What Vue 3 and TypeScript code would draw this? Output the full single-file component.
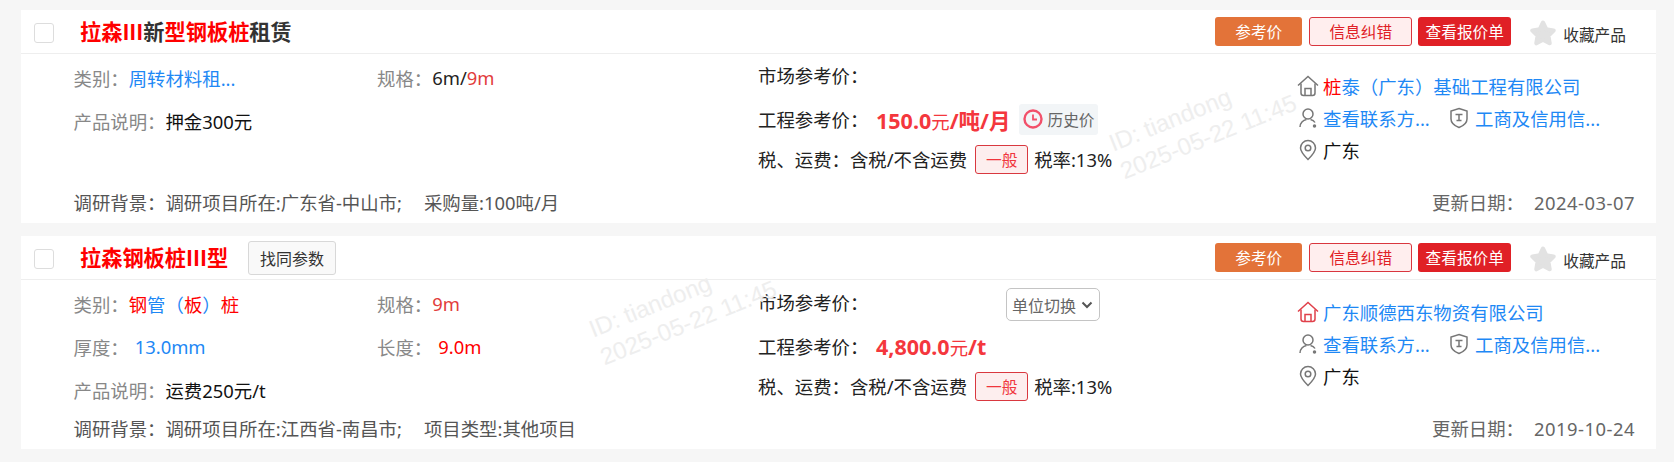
<script setup lang="ts">
type Seg = { t: string; red?: boolean };
type Field = { label: string; segs: Seg[]; cls?: string; gap?: boolean };

const products = [
  {
    id: 1,
    title: [
      { t: "拉森III", red: true },
      { t: "新" },
      { t: "型钢板桩", red: true },
      { t: "租赁" },
    ] as Seg[],
    same: false,
    fields: [
      { label: "类别：", segs: [{ t: "周转材料租..." }], cls: "blue" },
      { label: "规格：", segs: [{ t: "6m/" }, { t: "9m", red: true }], cls: "spec" },
    ] as Field[],
    note: "押金300元",
    background: "调研项目所在:广东省-中山市;",
    extra: "采购量:100吨/月",
    unitSwitch: false,
    price: "150.0",
    unit: "/吨/月",
    history: true,
    company: [{ t: "桩", red: true }, { t: "泰（广东）基础工程有限公司" }] as Seg[],
    houseRed: false,
    date: "2024-03-07",
    mark: "mark-a",
  },
  {
    id: 2,
    title: [{ t: "拉森钢板桩III型", red: true }] as Seg[],
    same: true,
    fields: [
      {
        label: "类别：",
        segs: [
          { t: "钢", red: true },
          { t: "管（" },
          { t: "板", red: true },
          { t: "）" },
          { t: "桩", red: true },
        ],
        cls: "blue",
      },
      { label: "规格：", segs: [{ t: "9m", red: true }], cls: "spec" },
      { label: "厚度：", segs: [{ t: "13.0mm" }], cls: "blue", gap: true },
      { label: "长度：", segs: [{ t: "9.0m", red: true }], gap: true },
    ] as Field[],
    note: "运费250元/t",
    background: "调研项目所在:江西省-南昌市;",
    extra: "项目类型:其他项目",
    unitSwitch: true,
    price: "4,800.0",
    unit: "/t",
    history: false,
    company: [{ t: "广东顺德西东物资有限公司" }] as Seg[],
    houseRed: true,
    date: "2019-10-24",
    mark: "mark-b",
  },
];
</script>

<template>
  <div class="page">
    <div v-for="p in products" :key="p.id" class="card">
      <div class="head">
        <span class="check"></span>
        <h3 class="title">
          <span v-for="s in p.title" :key="s.t" :class="{ red: s.red }">{{ s.t }}</span>
        </h3>
        <button v-if="p.same" class="same">找同参数</button>
        <div class="actions">
          <span class="btn orange">参考价</span>
          <span class="btn outline">信息纠错</span>
          <span class="btn solid">查看报价单</span>
          <span class="fav">
            <svg width="28" height="28" viewBox="1 2 26 26">
              <path
                d="M14 4.500l3 6.300 6.800 1-4.900 4.800 1.200 6.900-6.100-3.300-6.100 3.300 1.200-6.900-4.900-4.800 6.800-1z"
                fill="#e2e2e2"
                stroke="#e2e2e2"
                stroke-width="4"
                stroke-linejoin="round"
              />
            </svg>
            收藏产品
          </span>
        </div>
      </div>

      <div class="body">
        <div class="left">
          <div class="fields">
            <div v-for="f in p.fields" :key="f.label" class="field">
              <span class="label">{{ f.label }}</span>
              <span class="value" :class="[f.cls, { spaced: f.gap }]">
                <span v-for="s in f.segs" :key="s.t" :class="{ red: s.red }">{{ s.t }}</span>
              </span>
            </div>
            <div class="field wide">
              <span class="label">产品说明：</span>
              <span class="value note">{{ p.note }}</span>
            </div>
          </div>
          <div class="bg-row">
            <span>调研背景：</span>
            <span>{{ p.background }}</span>
            <span class="extra">{{ p.extra }}</span>
          </div>
        </div>

        <div class="mid" :class="{ 'has-select': p.unitSwitch }">
          <div class="mid-row">
            <span>市场参考价：</span>
            <span v-if="p.unitSwitch" class="select">
              单位切换
              <svg width="12" height="8" viewBox="0 0 12 8">
                <path d="M1.500 1.500L6 6l4.500-4.500" fill="none" stroke="#555" stroke-width="2" />
              </svg>
            </span>
          </div>
          <div class="mid-row">
            <span class="price-label">工程参考价：</span>
            <span class="price">{{ p.price }}<em>元</em>{{ p.unit }}</span>
            <span v-if="p.history" class="history">
              <svg width="20" height="20" viewBox="0 0 20 20">
                <circle cx="10" cy="10" r="8.500" fill="none" stroke="#f2506a" stroke-width="2.400" />
                <path d="M10 5.500V10.500H14" fill="none" stroke="#f2506a" stroke-width="1.800" />
              </svg>
              历史价
            </span>
          </div>
          <div class="mid-row tax">
            <span>税、运费：</span>
            <span>含税/不含运费</span>
            <span class="tag">一般</span>
            <span>税率:13%</span>
          </div>
        </div>

        <div class="right">
          <div class="line">
            <svg class="ico" width="22" height="22" viewBox="0 0 22 22" :class="{ 'ico-red': p.houseRed }">
              <path d="M1 10.500L11 1.500l10 9" />
              <path d="M4 8.500v9.500a2.500 2.500 0 0 0 2.500 2.500h9a2.500 2.500 0 0 0 2.500-2.500V8.500" />
              <path d="M8 20.500v-7h6v7" />
            </svg>
            <span class="link">
              <span v-for="s in p.company" :key="s.t" :class="{ red: s.red }">{{ s.t }}</span>
            </span>
          </div>
          <div class="line">
            <svg class="ico" width="22" height="22" viewBox="0 0 22 22">
              <circle cx="11" cy="7" r="5" />
              <path d="M3 20c0-4 3-7 6.500-7.500" />
              <path d="M13.500 12.500c2 .4 3.600 1.400 4.500 3" />
              <circle cx="17.500" cy="19" r="1" fill="#777" />
            </svg>
            <span class="link contact">查看联系方...</span>
            <svg class="ico shield" width="20" height="22" viewBox="0 0 20 22">
              <path d="M10 1.500l8 2.500v8c0 4-4 7-8 8.500-4-1.500-8-4.500-8-8.500V4z" />
              <path d="M6.500 7.500h7M10 7.500v6M7.500 13.500h5" />
            </svg>
            <span class="link">工商及信用信...</span>
          </div>
          <div class="line">
            <svg class="ico" width="22" height="22" viewBox="0 0 22 22">
              <path d="M11 20.500c-4-4-7.500-7.500-7.500-11.500a7.500 7.500 0 0 1 15 0c0 4-3.500 7.500-7.500 11.500z" />
              <circle cx="11" cy="9" r="2.800" />
            </svg>
            <span class="city">广东</span>
          </div>
          <div class="update">
            <span>更新日期：</span>
            <span class="date">{{ p.date }}</span>
          </div>
        </div>

        <div class="watermark" :class="p.mark">ID: tiandong<br />2025-05-22 11:45</div>
      </div>
    </div>
  </div>
</template>

<style>
html,
body {
  background: #f6f6f6;
}
</style>

<style scoped>
.page {
  width: 1674px;
  height: 462px;
  padding: 10px 18px 0 21px;
  box-sizing: border-box;
  background: #f6f6f6;
  font-family: "Noto Sans", "Noto Sans CJK SC", "Liberation Sans", sans-serif;
  font-size: 18.4px;
  color: #222;
  overflow: hidden;
}

.card {
  background: #fff;
  margin-bottom: 13px;
  overflow: hidden;
}

.head {
  display: flex;
  align-items: center;
  height: 43px;
  border-bottom: 1px solid #eeeeee;
  padding-left: 13px;
}

.check {
  width: 20px;
  height: 20px;
  box-sizing: border-box;
  border: 1px solid #dddddd;
  border-radius: 3px;
  margin-top: 3px;
}

.title {
  margin: -2px 0 0 26px;
  font-family: "Noto Sans CJK SC", sans-serif;
  font-size: 21.200px;
  font-weight: 700;
  color: #333;
  line-height: 28px;
}

.red {
  color: #ff0000;
}

.same {
  margin-left: 20px;
  width: 88px;
  height: 34px;
  padding: 0;
  background: #f9f9f9;
  border: 1px solid #d8d8d8;
  border-radius: 3px;
  font: inherit;
  font-size: 16px;
  color: #333;
}

.actions {
  margin-left: auto;
  display: flex;
  align-items: center;
  padding-right: 30px;
}

.btn {
  height: 29px;
  box-sizing: border-box;
  border-radius: 3px;
  font-size: 15.700px;
  display: flex;
  align-items: center;
  justify-content: center;
}

.orange {
  width: 87px;
  background: #e37339;
  color: #fff;
}

.outline {
  width: 103px;
  margin-left: 7px;
  background: #ffeeee;
  border: 1px solid #d9363e;
  color: #e02026;
}

.solid {
  width: 93px;
  margin-left: 6px;
  background: #e02026;
  color: #fff;
}

.fav {
  display: flex;
  align-items: center;
  margin-left: 18px;
  margin-top: 5px;
  font-size: 15.700px;
  color: #333;
  gap: 6px;
}

.body {
  position: relative;
  display: flex;
  min-height: 169px;
}

.left {
  width: 737px;
  padding-left: 52.500px;
  box-sizing: border-box;
  display: flex;
  flex-direction: column;
}

.fields {
  display: grid;
  grid-template-columns: 303.500px 1fr;
  grid-auto-rows: 43px;
  padding-top: 2px;
}

.field {
  display: flex;
  align-items: center;
}

.wide {
  grid-column: 1 / 3;
}

.label {
  color: #888;
}

.blue {
  color: #1e88f5;
}

.spec {
  color: #222;
}

.spec .red {
  color: #e23c3c;
}

.spaced {
  margin-left: 6px;
}

.note {
  color: #111;
}

.bg-row {
  margin-top: auto;
  height: 24px;
  margin-bottom: 8px;
  line-height: 24px;
  color: #555;
  display: flex;
}

.extra {
  margin-left: 22px;
}

.mid {
  position: relative;
  width: 539px;
  flex: none;
  box-sizing: border-box;
  margin-top: -1px;
}

.has-select {
  padding-top: 1px;
}

.mid-row {
  height: 44px;
  display: flex;
  align-items: center;
  color: #222;
}

.tax {
  height: 36px;
}

.price-label {
  width: 118px;
}

.price {
  font-size: 21.500px;
  font-weight: 700;
  color: #f4373d;
}

.price em {
  font-style: normal;
  font-weight: 400;
  font-size: 18.400px;
}

.history {
  display: flex;
  align-items: center;
  gap: 5px;
  margin-left: 8px;
  height: 31px;
  padding: 0 3px 0 4px;
  background: #f2f5f7;
  border-radius: 3px;
  font-size: 15.700px;
  color: #666;
}

.select {
  position: absolute;
  left: 248px;
  top: 9px;
  width: 94px;
  height: 33px;
  box-sizing: border-box;
  border: 1px solid #c4c4c4;
  border-radius: 5px;
  display: flex;
  align-items: center;
  gap: 5px;
  padding-left: 5px;
  font-size: 16px;
  color: #666;
}

.tag {
  width: 53px;
  height: 29px;
  margin: 0 6px 0 8px;
  box-sizing: border-box;
  background: #fdeeee;
  border: 1px solid #d9383f;
  border-radius: 3px;
  display: flex;
  align-items: center;
  justify-content: center;
  font-size: 15.700px;
  color: #f0353c;
}

.right {
  flex: 1;
  padding-top: 16px;
  padding-right: 21px;
  display: flex;
  flex-direction: column;
}

.line {
  height: 32px;
  display: flex;
  align-items: center;
}

.ico {
  flex: none;
  fill: none;
  stroke: #777;
  stroke-width: 1.500;
  margin-right: 4px;
}

.ico-red {
  stroke: #e0404a;
}

.shield {
  margin-right: 6px;
}

.link {
  color: #1e88f5;
}

.contact {
  width: 126px;
}

.city {
  color: #111;
}

.update {
  margin-top: auto;
  margin-bottom: 8px;
  height: 24px;
  line-height: 24px;
  display: flex;
  justify-content: flex-end;
  color: #666;
}

.date {
  margin-left: 10px;
  letter-spacing: 0.5px;
}

.watermark {
  position: absolute;
  font-family: "Liberation Sans", sans-serif;
  font-size: 24px;
  line-height: 30px;
  color: #eeeeee;
  white-space: nowrap;
  transform: rotate(-22deg);
  transform-origin: left bottom;
  pointer-events: none;
}

.mark-a {
  left: 1106px;
  top: 72px;
}

.mark-b {
  left: 586px;
  top: 32px;
}
</style>
